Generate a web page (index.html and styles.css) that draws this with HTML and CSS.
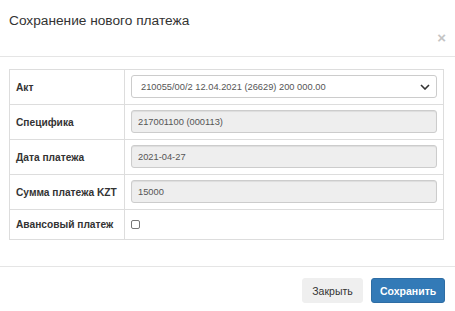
FILE: index.html
```html
<!DOCTYPE html>
<html lang="ru">
<head>
    <meta charset="UTF-8">
    <meta name="viewport" content="width=device-width, initial-scale=1.0">
    <title>Сохранение нового платежа</title>
    <link rel="stylesheet" href="styles.css">
</head>
<body>
    <div class="modal">
        <div class="modal-header">
            <h4 class="modal-title">Сохранение нового платежа</h4>
            <button class="close" type="button">&times;</button>
        </div>
        <div class="modal-body">
            <table class="form-table">
                <tr>
                    <th>Акт</th>
                    <td>
                        <div class="select">
                            <span>210055/00/2 12.04.2021 (26629) 200 000.00</span>
                            <svg width="10" height="6" viewBox="0 0 10 6"><path d="M1 1l4 4 4-4" fill="none" stroke="#333" stroke-width="1.6"/></svg>
                        </div>
                    </td>
                </tr>
                <tr>
                    <th>Специфика</th>
                    <td><input class="form-control" type="text" value="217001100 (000113)" readonly></td>
                </tr>
                <tr>
                    <th>Дата платежа</th>
                    <td><input class="form-control" type="text" value="2021-04-27" readonly></td>
                </tr>
                <tr>
                    <th>Сумма платежа KZT</th>
                    <td><input class="form-control" type="text" value="15000" readonly></td>
                </tr>
                <tr class="row-check">
                    <th>Авансовый платеж</th>
                    <td><span class="checkbox"></span></td>
                </tr>
            </table>
        </div>
        <div class="modal-footer">
            <button class="btn btn-light" type="button">Закрыть</button>
            <button class="btn btn-primary" type="button">Сохранить</button>
        </div>
    </div>
</body>
</html>
```

FILE: styles.css
```css
* {
    margin: 0;
    padding: 0;
    box-sizing: border-box;
}

body {
    background-color: #fff;
    font-family: "Liberation Sans", Arial, sans-serif;
    color: #333;
}

.modal {
    width: 455px;
    height: 311px;
    background-color: #fff;
}

.modal-header {
    display: flex;
    flex-direction: column;
    padding: 12px 9px 11px 9px;
    border-bottom: 1px solid #e5e5e5;
    height: 57px;
}

.modal-title {
    font-size: 13.7px;
    font-weight: normal;
    line-height: 18px;
    color: #333;
}

.close {
    align-self: flex-end;
    margin-top: 1px;
    background: none;
    border: none;
    font-family: "Liberation Sans", Arial, sans-serif;
    font-size: 15px;
    font-weight: bold;
    line-height: 14px;
    color: #c4c4c4;
    cursor: pointer;
}

.modal-body {
    padding: 12px 11px 0 9px;
    height: 209px;
}

.form-table {
    width: 435px;
    table-layout: fixed;
    border-collapse: collapse;
    border: 1px solid #ddd;
}

.form-table th,
.form-table td {
    border: 1px solid #ddd;
    vertical-align: middle;
}

.form-table th {
    width: 115px;
    padding: 0 6px;
    text-align: left;
    white-space: nowrap;
    font-size: 10.2px;
    font-weight: bold;
    color: #333;
}

.form-table td {
    padding: 5px 6px 6px 6px;
    height: 35px;
}

.form-table .row-check th,
.form-table .row-check td {
    height: 30px;
}

.form-control,
.select {
    display: block;
    width: 100%;
    height: 23px;
    border: 1px solid #ccc;
    border-radius: 3px;
    font-family: "Liberation Sans", Arial, sans-serif;
    font-size: 9.3px;
    color: #555;
}

.form-control {
    padding: 0 6px;
    background-color: #eee;
    box-shadow: inset 0 1px 1px rgba(0, 0, 0, 0.075);
}

.select {
    display: flex;
    align-items: center;
    justify-content: space-between;
    padding: 0 6px 0 9px;
    background-color: #fff;
}

.checkbox {
    display: block;
    width: 9px;
    height: 9px;
    border: 1px solid #777;
    border-radius: 2px;
}

.modal-footer {
    display: flex;
    justify-content: flex-end;
    gap: 8px;
    padding: 11px 10px 0 0;
    border-top: 1px solid #e5e5e5;
}

.btn {
    height: 25px;
    padding: 0 8px;
    border-radius: 3px;
    font-family: "Liberation Sans", Arial, sans-serif;
    font-size: 10.5px;
    cursor: pointer;
}

.btn-light {
    width: 61px;
    background-color: #efefef;
    border: 1px solid #efefef;
    color: #333;
}

.btn-primary {
    width: 74px;
    background-color: #337ab7;
    border: 1px solid #2e6da4;
    color: #fff;
    font-weight: bold;
}
```
